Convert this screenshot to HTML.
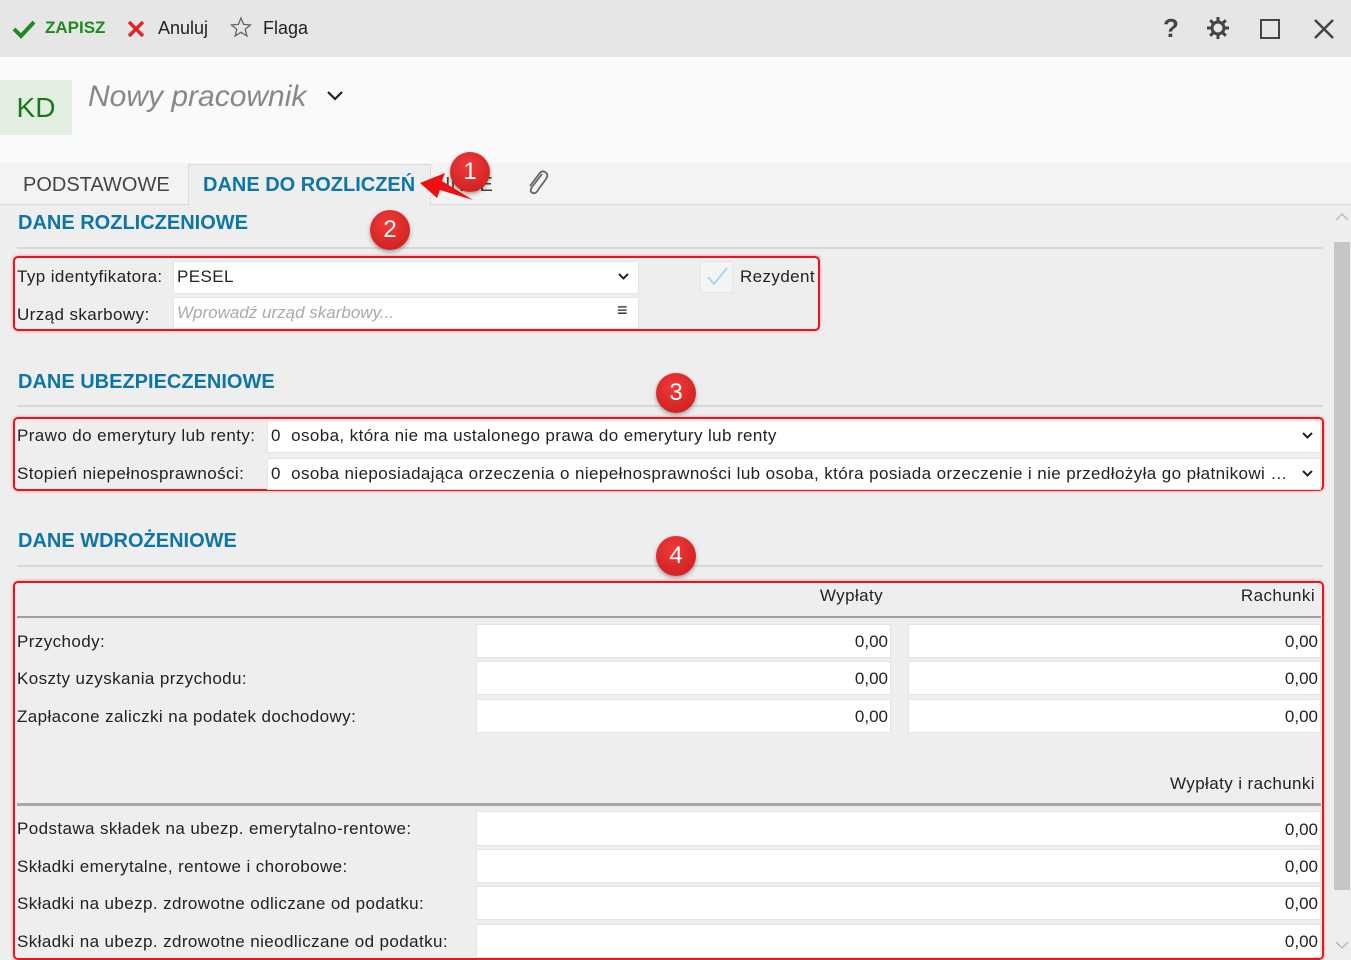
<!DOCTYPE html>
<html><head><meta charset="utf-8"><style>
*{margin:0;padding:0;box-sizing:border-box}
body{width:1351px;height:960px;overflow:hidden;background:#eeeeee;font-family:"Liberation Sans",sans-serif;font-size:17px;color:#222;position:relative}
.a{position:absolute;white-space:nowrap}
.t{letter-spacing:0.4px}
.inp{position:absolute;background:#fff;border:1px solid #e4e4e4}
.h{position:absolute;color:#0d76a6;font-weight:bold;font-size:20px;left:18px}
.ln{position:absolute;left:17px;width:1306px;height:2px;background:#d8d8d8}
.rb{position:absolute;border:2px solid #e8141e;border-radius:5px;box-shadow:0 0 3px rgba(200,0,0,.35)}
.bd{position:absolute;width:40px;height:40px;border-radius:50%;background:radial-gradient(circle at 45% 35%,#f03a3a,#c81a1a);color:#fff;font-size:24px;text-align:center;line-height:40px;box-shadow:0 2px 4px rgba(0,0,0,.35)}
.num{position:absolute;text-align:right;padding-right:2px;padding-top:1px}
.lb{position:absolute;left:17px;letter-spacing:0.4px;white-space:nowrap}
</style></head><body>
<div class="a" style="left:0;top:0;width:1351px;height:57px;background:#e6e6e6"></div>
<svg class="a" style="left:12px;top:19px" width="24" height="20"><path d="M2 10 L9 17 L22 3" stroke="#1e8a1e" stroke-width="4" fill="none"/></svg>
<div class="a" style="left:45px;top:18px;color:#1e8a1e;font-weight:bold;font-size:17px">ZAPISZ</div>
<svg class="a" style="left:126px;top:19px" width="20" height="20"><path d="M3 3 L17 17 M17 3 L3 17" stroke="#e3242b" stroke-width="3.5"/></svg>
<div class="a" style="left:158px;top:18px;font-size:18px">Anuluj</div>
<svg class="a" style="left:230px;top:16px" width="22" height="22"><path d="M11 2 L13.6 8.4 L20.5 8.9 L15.2 13.3 L16.9 20 L11 16.3 L5.1 20 L6.8 13.3 L1.5 8.9 L8.4 8.4 Z" stroke="#666" stroke-width="1.3" fill="none"/></svg>
<div class="a" style="left:263px;top:18px;font-size:18px">Flaga</div>
<div class="a" style="left:1163px;top:13px;font-size:26px;color:#444;font-weight:bold">?</div>
<svg class="a" style="left:1206px;top:16px" width="24" height="24" viewBox="0 0 24 24"><g stroke="#444" stroke-width="3"><path d="M12 1v5M12 18v5M1 12h5M18 12h5M4.2 4.2l3.5 3.5M16.3 16.3l3.5 3.5M4.2 19.8l3.5-3.5M16.3 7.7l3.5-3.5"/></g><circle cx="12" cy="12" r="6" fill="none" stroke="#444" stroke-width="3"/></svg>
<div class="a" style="left:1260px;top:19px;width:20px;height:20px;border:2.5px solid #444"></div>
<svg class="a" style="left:1313px;top:18px" width="22" height="22"><path d="M2 2 L20 20 M20 2 L2 20" stroke="#444" stroke-width="2.5"/></svg>

<div class="a" style="left:0;top:57px;width:1351px;height:106px;background:#fafafa"></div>
<div class="a" style="left:0;top:80px;width:72px;height:55px;background:#e3eee3;color:#1a7a1a;font-size:28px;text-align:center;line-height:55px">KD</div>
<div class="a" style="left:88px;top:80px;font-size:30px;font-style:italic;color:#888">Nowy pracownik</div>
<svg class="a" style="left:326px;top:90px" width="18" height="12"><path d="M2 2 L9 9 L16 2" stroke="#222" stroke-width="2.2" fill="none"/></svg>

<div class="a" style="left:0;top:163px;width:1351px;height:42px;background:#f3f3f3;border-bottom:1px solid #d8d8d8"></div>
<div class="a" style="left:23px;top:174px;font-size:20px;color:#444">PODSTAWOWE</div>
<div class="a" style="left:188px;top:164px;width:243px;height:42px;background:#eeeeee;border:1px solid #ddd;border-bottom:none"></div>
<div class="a" style="left:203px;top:174px;font-size:20px;color:#0d76a6;font-weight:bold">DANE DO ROZLICZEŃ</div>
<div class="a" style="left:445px;top:174px;font-size:20px;color:#444">INNE</div>
<svg class="a" style="left:524px;top:168px" width="26" height="28" viewBox="0 0 26 28"><path d="M18 6 L8 19 Q5 24 9 25 Q12 26 14 22 L22 11 Q25 6 21 4 Q18 2 15 6 L6 18" stroke="#666" stroke-width="1.8" fill="none"/></svg>
<svg class="a" style="left:415px;top:170px" width="70" height="40"><path d="M5 13 L30 3 L27 11 L58 30 L25 20 L22 28 Z" fill="#ee1111"/></svg>
<div class="bd" style="left:450px;top:152px">1</div>

<div class="a" style="left:1333px;top:205px;width:18px;height:755px;background:#eeeeee"></div>
<svg class="a" style="left:1335px;top:212px" width="14" height="10"><path d="M1 8 L7 2 L13 8" stroke="#bbb" stroke-width="1.5" fill="none"/></svg>
<div class="a" style="left:1334px;top:242px;width:16px;height:648px;background:#c6c6c6"></div>
<svg class="a" style="left:1335px;top:940px" width="14" height="10"><path d="M1 2 L7 8 L13 2" stroke="#bbb" stroke-width="1.5" fill="none"/></svg>

<div class="h" style="top:212px">DANE ROZLICZENIOWE</div>
<div class="ln" style="top:247px"></div>
<div class="bd" style="left:370px;top:210px">2</div>
<div class="rb" style="left:13px;top:256px;width:807px;height:75px"></div>
<div class="lb" style="top:267px">Typ identyfikatora:</div>
<div class="inp" style="left:173px;top:261px;width:466px;height:33px"></div>
<div class="a t" style="left:177px;top:267px">PESEL</div>
<svg class="a" style="left:617px;top:272px" width="13" height="9"><path d="M2 2 L6.5 6.5 L11 2" stroke="#222" stroke-width="2" fill="none"/></svg>
<div class="lb" style="top:305px">Urząd skarbowy:</div>
<div class="inp" style="left:173px;top:297px;width:466px;height:32px"></div>
<div class="a" style="left:177px;top:303px;color:#aaa;font-style:italic">Wprowadź urząd skarbowy...</div>
<div class="a" style="left:617px;top:300px;font-size:18px">≡</div>
<div class="inp" style="left:700px;top:261px;width:33px;height:32px;background:#f4f4f4"></div>
<svg class="a" style="left:705px;top:265px" width="24" height="22"><path d="M3 12 L9 19 L22 3" stroke="#a8d8ee" stroke-width="2" fill="none"/></svg>
<div class="a t" style="left:740px;top:267px">Rezydent</div>

<div class="h" style="top:371px">DANE UBEZPIECZENIOWE</div>
<div class="ln" style="top:405px"></div>
<div class="bd" style="left:656px;top:373px">3</div>
<div class="rb" style="left:13px;top:417px;width:1311px;height:74px"></div>
<div class="lb" style="top:426px">Prawo do emerytury lub renty:</div>
<div class="inp" style="left:267px;top:420px;width:1054px;height:33px"></div>
<div class="a t" style="left:271px;top:426px">0&nbsp; osoba, która nie ma ustalonego prawa do emerytury lub renty</div>
<svg class="a" style="left:1301px;top:431px" width="13" height="9"><path d="M2 2 L6.5 6.5 L11 2" stroke="#222" stroke-width="2" fill="none"/></svg>
<div class="lb" style="top:464px">Stopień niepełnosprawności:</div>
<div class="inp" style="left:267px;top:458px;width:1054px;height:32px"></div>
<div class="a t" style="left:271px;top:464px;width:1020px;overflow:hidden;text-overflow:ellipsis">0&nbsp; osoba nieposiadająca orzeczenia o niepełnosprawności lub osoba, która posiada orzeczenie i nie przedłożyła go płatnikowi składek</div>
<svg class="a" style="left:1301px;top:469px" width="13" height="9"><path d="M2 2 L6.5 6.5 L11 2" stroke="#222" stroke-width="2" fill="none"/></svg>

<div class="h" style="top:530px">DANE WDROŻENIOWE</div>
<div class="ln" style="top:565px"></div>
<div class="bd" style="left:656px;top:536px">4</div>
<div class="rb" style="left:13px;top:581px;width:1311px;height:379px"></div>
<div class="a t" style="left:700px;top:586px;width:183px;text-align:right">Wypłaty</div>
<div class="a t" style="left:1130px;top:586px;width:185px;text-align:right">Rachunki</div>
<div class="a" style="left:17px;top:616px;width:1304px;height:2px;background:#a0a0a0"></div>

<div class="lb" style="top:632px">Przychody:</div>
<div class="lb" style="top:669px">Koszty uzyskania przychodu:</div>
<div class="lb" style="top:707px">Zapłacone zaliczki na podatek dochodowy:</div>
<div class="inp num" style="left:476px;top:624px;width:415px;height:34px;line-height:32px">0,00</div>
<div class="inp num" style="left:476px;top:661px;width:415px;height:34px;line-height:32px">0,00</div>
<div class="inp num" style="left:476px;top:699px;width:415px;height:34px;line-height:32px">0,00</div>
<div class="inp num" style="left:908px;top:624px;width:413px;height:34px;line-height:32px">0,00</div>
<div class="inp num" style="left:908px;top:661px;width:413px;height:34px;line-height:32px">0,00</div>
<div class="inp num" style="left:908px;top:699px;width:413px;height:34px;line-height:32px">0,00</div>

<div class="a t" style="left:1100px;top:774px;width:215px;text-align:right">Wypłaty i rachunki</div>
<div class="a" style="left:17px;top:803px;width:1304px;height:3px;background:#a8a8a8"></div>

<div class="lb" style="top:819px">Podstawa składek na ubezp. emerytalno-rentowe:</div>
<div class="lb" style="top:857px">Składki emerytalne, rentowe i chorobowe:</div>
<div class="lb" style="top:894px">Składki na ubezp. zdrowotne odliczane od podatku:</div>
<div class="lb" style="top:932px">Składki na ubezp. zdrowotne nieodliczane od podatku:</div>
<div class="inp num" style="left:476px;top:811px;width:845px;height:35px;line-height:33px">0,00</div>
<div class="inp num" style="left:476px;top:849px;width:845px;height:34px;line-height:32px">0,00</div>
<div class="inp num" style="left:476px;top:886px;width:845px;height:34px;line-height:32px">0,00</div>
<div class="inp num" style="left:476px;top:924px;width:845px;height:34px;line-height:32px">0,00</div>
</body></html>
